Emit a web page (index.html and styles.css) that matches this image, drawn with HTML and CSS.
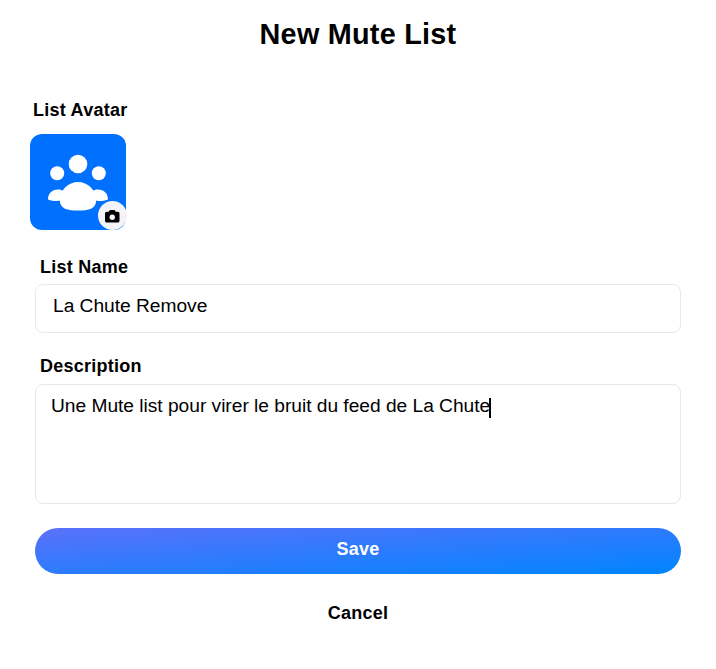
FILE: index.html
```html
<!DOCTYPE html>
<html lang="en">
<head>
<meta charset="utf-8">
<title>New Mute List</title>
<link rel="stylesheet" href="styles.css">
</head>
<body>
<main class="modal">
  <h1 class="title">New Mute List</h1>
  <div class="label avatar-label">List Avatar</div>
  <div class="avatar">
    <svg class="avatar-art" viewBox="0 0 96 96" aria-hidden="true">
      <rect width="96" height="96" rx="12" fill="#0070ff"/>
      <g fill="#fff">
        <circle cx="48" cy="30" r="9.3"/>
        <circle cx="27.2" cy="39.3" r="7"/>
        <circle cx="68.8" cy="39.3" r="7"/>
        <path d="M18 65.4C18 59.5 22.4 55.6 27.8 55.6C30 55.6 31.5 56 32.8 56.800L36 60V66.8H29.6C25.8 67.1 21.8 66.8 18 65.4Z"/>
        <path d="M78 65.4C78 59.5 73.6 55.6 68.2 55.6C66 55.6 64.500 56 63.200 56.800L60 60V66.8H66.4C70.2 67.1 74.2 66.8 78 65.4Z"/>
        <path d="M48 48C38.500 48 29.8 56 29.8 66C29.8 75.200 37.500 76.500 48 76.500C58.500 76.500 66.2 75.200 66.2 66C66.2 56 57.500 48 48 48Z"/>
      </g>
    </svg>
    <span class="badge">
      <svg class="camera" viewBox="0 0 512 512" aria-hidden="true"><path d="M149.1 64.8L138.7 96H64C28.7 96 0 124.7 0 160V416c0 35.3 28.7 64 64 64H448c35.3 0 64-28.7 64-64V160c0-35.3-28.7-64-64-64H373.3L362.9 64.8C356.4 45.2 338.1 32 317.4 32H194.6c-20.7 0-39 13.2-45.5 32.8zM256 192a96 96 0 1 1 0 192 96 96 0 1 1 0-192z"/></svg>
    </span>
  </div>
  <div class="label name-label">List Name</div>
  <div class="field name-field">La Chute Remove</div>
  <div class="label desc-label">Description</div>
  <div class="field desc-field">Une Mute list pour virer le bruit du feed de La Chute<span class="caret"></span></div>
  <button class="button save">Save</button>
  <button class="button cancel">Cancel</button>
</main>
</body>
</html>
```
FILE: styles.css
```css
* { box-sizing: border-box; }
body {
  margin: 0;
  background: #fff;
  color: #000;
  font-family: "Liberation Sans", Arial, sans-serif;
  letter-spacing: 0.25px;
}
.modal {
  display: flex;
  flex-direction: column;
  height: 669px;
  padding: 17px 35px 0;
}
.title {
  margin: 0;
  font-size: 28.8px;
  line-height: 34px;
  text-align: center;
}
.label {
  font-size: 18px;
  font-weight: 700;
  line-height: 22px;
  margin-left: 5px;
}
.avatar-label { margin: 48px 0 0 -2px; }
.avatar {
  position: relative;
  width: 96px;
  height: 96px;
  margin: 13px 0 0 -5px;
}
.avatar-art { display: block; }
.badge {
  position: absolute;
  right: -1px;
  bottom: 0;
  display: flex;
  align-items: center;
  justify-content: center;
  width: 29px;
  height: 29px;
  padding-top: 1px;
  border-radius: 50%;
  background: #f3f3f8;
}
.camera { width: 14.5px; height: 14.5px; }
.name-label { margin-top: 26px; }
.field {
  border: 1px solid #e8e8ea;
  border-radius: 8px;
  font-size: 19.2px;
  line-height: 23px;
  letter-spacing: -0.025px;
}
.name-field {
  height: 49px;
  margin-top: 6px;
  padding: 9px 17px;
}
.desc-label { margin-top: 22px; }
.desc-field {
  height: 120px;
  margin-top: 7px;
  padding: 9px 15px;
}
.caret {
  display: inline-block;
  width: 2px;
  height: 20px;
  margin-left: -1px;
  background: #000;
  vertical-align: -6px;
}
.button {
  height: 46px;
  padding: 0 0 4px;
  border: 0;
  border-radius: 23px;
  font: 700 18px/22px "Liberation Sans", Arial, sans-serif;
  letter-spacing: 0.25px;
}
.save {
  margin-top: 24px;
  background: linear-gradient(to bottom right, #5a71fa, #0085ff);
  color: #fff;
}
.cancel {
  margin-top: 18px;
  background: none;
  color: #000;
}
```
